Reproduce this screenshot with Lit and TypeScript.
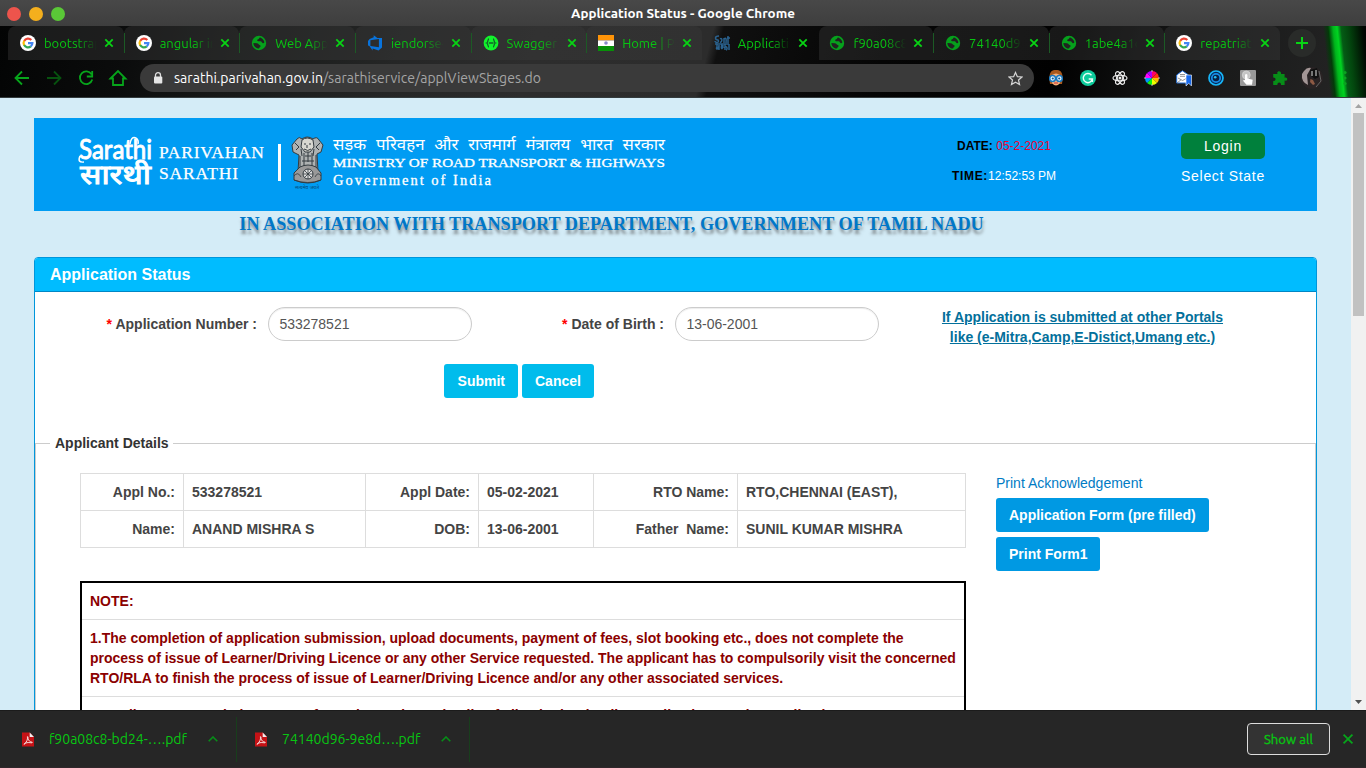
import { LitElement, html, css, svg } from "lit";
import { customElement } from "lit/decorators.js";

const google = svg`<circle cx="8" cy="8" r="8" fill="#fff"/><g fill="none" stroke-width="2.2"><path d="M4.2 5.9A4.4 4.4 0 0 1 11.3 5" stroke="#ea4335"/><path d="M4.2 5.7A4.4 4.4 0 0 0 4.2 10.3" stroke="#fbbc05"/><path d="M4.1 10.1A4.4 4.4 0 0 0 10.8 11.4" stroke="#34a853"/><path d="M8 8.1H12.4A4.4 4.4 0 0 1 10.7 11.5" stroke="#4285f4"/></g>`;
const globe = svg`<circle cx="8" cy="8" r="7.2" fill="#06a01c"/><path d="M8.8 2.5C9.8 2.5 12.9 4.2 13.4 7.2C13 8.4 11.6 8.5 11 7.6C10.6 6.6 10 6.1 8.6 6.2C7 6.3 5.9 5.9 6.2 4.9C6.6 3.9 7.9 4.3 8 3.4zM2.4 7.9L5.8 8.3C7.6 8.5 7.4 9.7 8.6 9.9C9.8 10.1 10 11.4 9 11.9C8 12.4 8.4 13.4 7.6 13.5C4.6 13.2 2.4 10.8 2.4 7.9z" fill="#202220"/>`;
const devops = svg`<path d="M1 6L2.6 3.9L6.7 2.2V.2L10.4 3L15 2.9V12.5L11.5 15.5L5.6 13.5V15.4L2.4 11.1L1 10.6ZM3.4 5.2V11L11.9 12.2V3.9Z" fill-rule="evenodd" fill="#0873dc"/>`;
const swagger = svg`<circle cx="8" cy="8" r="7.4" fill="#12f32c"/><path d="M6 4C4.6 4 5.2 7.5 3.7 8C5.2 8.5 4.6 12 6 12M10 4C11.4 4 10.8 7.5 12.3 8C10.8 8.5 11.4 12 10 12M5.8 8H10.5" fill="none" stroke="#126129" stroke-width="1.3"/>`;
const flag = svg`<path fill="#ff9408" d="M0 0H16V5.4H0z"/><path fill="#fff" d="M0 5.4H16V11H0z"/><path fill="#079008" d="M0 11H16V16H0z"/><circle cx="8" cy="8" r="1.8" fill="#8889cb"/>`;
const sarathi = svg`<g fill="none" stroke="#2a628f" stroke-width="1.5"><path d="M5 1C0 1 1 5 4 5C6 8 1 8 1 6M6 4C9 2 8 8 6 7M10 8V3M10 4C13 1 12 7 12 8M14 1V8M13 3H16M1 9H15M3 9V12C1 15 5 15 5 10V15M8 9C6 15 9 15 9 10M11 9V15M10 13C13 9 14 15 12 15M15 9V15"/></g>`;

const tabs = [
  { icon: google, label: "bootstrap" }, { icon: google, label: "angular in" }, { icon: globe, label: "Web Appli" },
  { icon: devops, label: "iendorse-" }, { icon: swagger, label: "Swagger U" }, { icon: flag, label: "Home | Pa" },
  { icon: sarathi, label: "Applicati", active: true }, { icon: globe, label: "f90a08c8-" }, { icon: globe, label: "74140d96" },
  { icon: globe, label: "1abe4a1c" }, { icon: google, label: "repatriati" },
];

const extensions = [
  svg`<path d="M2 14C0 1 4 0 8 0S16 1 14 14z" fill="#a9581b"/><path d="M4 5Q8 2 12 5V13Q8 18 4 13z" fill="#f6b17b"/><g fill="#e8f7ff" stroke="#1779c1" stroke-width="1.5"><circle cx="4.6" cy="8.5" r="2.9"/><circle cx="11.4" cy="8.5" r="2.9"/></g><circle cx="4.8" cy="8.5" r="1.1" fill="#125a94"/><circle cx="11.2" cy="8.5" r="1.1" fill="#125a94"/><path d="M6 13H10" stroke="#c6313a"/>`,
  svg`<circle cx="8" cy="8" r="8" fill="#0ecb9c"/><path d="M11.5 5.2A4.6 4.6 0 1 0 12.4 9H8.7M12.4 9V12" fill="none" stroke="#eafff8" stroke-width="1.4"/>`,
  svg`<g fill="none" stroke="#eee" stroke-width="1.15"><ellipse cx="8" cy="8" rx="7" ry="2.8"/><ellipse cx="8" cy="8" rx="7" ry="2.8" transform="rotate(60 8 8)"/><ellipse cx="8" cy="8" rx="7" ry="2.8" transform="rotate(120 8 8)"/></g><circle cx="8" cy="8" r="1.5" fill="#eee"/>`,
  svg`<path fill="#f0f" d="M8 8L1 8A7 7 0 0 1 3 3z"/><path fill="#a0f" d="M8 8L3 3A7 7 0 0 1 8 1z"/><path fill="#f06" d="M8 8L8 1A7 7 0 0 1 13 3z"/><path fill="#f31" d="M8 8L13 3A7 7 0 0 1 15 8z"/><path fill="#fb0" d="M8 8H15A7 7 0 0 1 13 13z"/><path fill="#ef0" d="M8 8L13 13A7 7 0 0 1 8 15z"/><path fill="#1e1" d="M8 8V15A7 7 0 0 1 3 13z"/><path fill="#09f" d="M8 8L3 13A7 7 0 0 1 1 8z"/><path d="M8 0V2M8 14V16M0 8H2M14 8H16" stroke="#bbb"/>`,
  svg`<path d="M.7 5L6.5.8L12.5 5V13H.7z" fill="#fff" stroke="#2470da"/><path d="M2 8L6.6 10.5L11 8M4 4.5H9M4 6.3H9M1 13L5 9.8" stroke="#777" stroke-width=".8" fill="none"/><path d="M10 5H15.5V16L12.7 13.3L10 16z" fill="#1769ed" stroke="#fff" stroke-width=".6"/>`,
  svg`<circle cx="8" cy="8" r="7" fill="#092654" stroke="#17b5f8" stroke-width="1.7"/><circle cx="8" cy="8" r="4.2" fill="#092043" stroke="#168be6" stroke-width="1.8"/><circle cx="7.2" cy="7.2" r="1.3" fill="#24bdf3"/>`,
  svg`<rect width="16" height="16" rx="1" fill="#999"/><circle cx="6.3" cy="5" r="4" fill="#c5c5c5" stroke="#ddd" stroke-width=".6"/><path d="M5 4.8Q6.3 3 7.4 4.8V8.4L12.7 9.8L12 14.8H6.5L2.8 10.5L5 10.1z" fill="#fff"/>`,
  svg`<path d="M1.2 4H5.5C4 1 9.3-.2 9.1 4H12.6V7.7C16.1 6.7 16.2 11.5 12.6 10.6V15H9C9.4 11.5 5 11.6 5.4 15H1.2V11C4.3 11 4.4 7.3 1.2 7.4z" fill="#078d18"/>`,
];

const rows = [
  ["Appl No.:", "533278521", "Appl Date:", "05-02-2021", "RTO Name:", "RTO,CHENNAI (EAST),"],
  ["Name:", "ANAND MISHRA S", "DOB:", "13-06-2001", "Father\u00a0 Name:", "SUNIL KUMAR MISHRA"],
];

const cross = html`<svg class="cross" viewBox="0 0 10 10"><path d="M1.3 1.3L8.7 8.7M8.7 1.3L1.3 8.7"/></svg>`;
const pdf = html`<svg class="pdf" viewBox="0 0 13 15"><path d="M0 0H8.5L13 4.5V15H0z" fill="#c51216"/><path d="M8.3 0L13 4.7H8.3z" fill="#eee"/><path d="M2.2 12.8C5 10.8 6.4 7 5.9 5C5.4 4 7 4 6.4 6C7 9 9 10.3 11 10.4C11.9 11.6 9 10.8 6.6 10.8C4.5 11 1.8 12.1 2.2 12.8" fill="none" stroke="#fff" stroke-width=".9"/></svg>`;

@customElement("app-root")
export class AppRoot extends LitElement {
  static styles = css`
    :host { display: flex; flex-direction: column; width: 1366px; height: 768px; overflow: hidden; font: 14px/20px "Liberation Sans", Arial, sans-serif; color: #444; }
    * { box-sizing: border-box; }
    svg { display: block; flex: none; }
    .titlebar { height: 26px; flex: none; display: grid; grid-template-columns: 1fr auto 1fr; align-items: center; background: linear-gradient(#484848, #3e3e3e); color: #fff; font: bold 13.4px/27px Ubuntu, "Noto Sans", sans-serif; }
    .lights { display: flex; gap: 8px; padding-left: 7px; }
    .light { width: 14px; height: 14px; border-radius: 50%; }
    .red { background: #ed544c; } .amber { background: #f4af1d; } .green { background: #5ac837; }
    .chrome { height: 72px; flex: none; font-family: Ubuntu, "Noto Sans", sans-serif; border-bottom: 1px solid #333b3d; background:
      linear-gradient(84deg, transparent 1323px, #023b08 1328px, #00b51c 1333px, #00d421 1337px, #045c15 1341px, #03460e 1348px, #010a02 1362px, #000 100%),
      linear-gradient(105deg, #030404 0, #0b0c0c 130px, #171918 230px, #252626 390px, #2d2d2d 520px, #2c2c2c 690px, #101010 700px, #050505 860px, #010101 1030px, #171818 1160px, #242424 1320px, #123216 100%); }
    .tabrow { height: 34px; display: flex; padding-left: 8px; }
    .tabs { width: 1272px; display: grid; grid-template-columns: repeat(11, 1fr); }
    .tab { display: flex; align-items: center; padding-left: 12px; border-radius: 8px 8px 0 0; background: rgba(58,58,58,.42); min-width: 0; position: relative; }
    .tab.active { background: none; }
    .tab.active + .tab { margin-left: 2px; padding-left: 10px; }
    .tab.sep::after { content: ""; position: absolute; right: -1px; top: 7px; width: 1px; height: 20px; background: #087218; }
    .favicon { width: 16px; height: 16px; }
    .label { width: 53px; margin-left: 8px; overflow: hidden; white-space: nowrap; font-size: 13px; line-height: 21px; padding-top: 1px; color: #08c512; mask-image: linear-gradient(90deg, #000 62%, transparent); }
    .cross { width: 10px; height: 10px; margin-left: 7px; fill: none; stroke: #08d414; stroke-width: 1.8; }
    .newtab { width: 28px; height: 28px; margin: 3px 0 0 8px; border-radius: 50%; background: #292b29; display: grid; place-items: center; }
    .newtab svg { width: 12px; height: 12px; stroke: #08d414; stroke-width: 2; }
    .toolbar { height: 36px; display: flex; align-items: center; padding-left: 14px; }
    .nav { display: flex; gap: 16px; width: 126px; }
    .nav svg { width: 16px; height: 16px; fill: none; stroke: #07a51b; stroke-width: 1.8; overflow: visible; }
    .nav .dim { stroke: #07520f; }
    .address { width: 894px; height: 28px; border-radius: 14px; background: #3a3a3a; display: flex; align-items: center; padding: 0 11px 0 13px; }
    .lock { width: 10px; height: 12px; }
    .url { margin-left: 11px; flex: 1; font-size: 14px; letter-spacing: .03px; color: #a5a5a5; }
    .host { color: #fff; }
    .star { width: 15px; height: 15px; fill: none; stroke: #d4d4d4; stroke-width: 1.3; }
    .exts { display: flex; gap: 16px; margin-left: 14px; align-items: center; }
    .exts svg { width: 16px; height: 16px; }
    .avatar { margin: 0 0 0 13px; width: 22px; height: 22px; }
    .menu { width: 4px; height: 16px; margin-left: 20px; fill: #0aa31f; }
    .viewport { height: 612px; flex: none; display: flex; overflow: hidden; background: #d4ecf7; }
    .page { width: 1351px; padding: 20px 34px 0; overflow: hidden; }
    .banner { height: 93px; background: #009cf3; display: flex; }
    .brand { width: 640px; height: 93px; }
    .brand text { fill: #fff; }
    .clock { width: 150px; margin-left: 255px; padding-top: 18px; text-align: center; font-size: 12px; }
    .clock div { height: 30px; }
    .clock b { color: #000; }
    .clock .date { color: #f00030; }
    .clock .tick { letter-spacing: .7px; }
    .time { color: #fff; }
    .account { width: 84px; margin-left: 102px; padding-top: 15px; text-align: center; color: #fff; letter-spacing: .7px; white-space: nowrap; }
    .login { height: 26px; line-height: 26px; border-radius: 5px; background: #00803c; margin-bottom: 7px; }
    .association { height: 46px; padding: 3px 128px 0 0; text-align: center; color: #0077c8; font: bold 18.2px/20px "Liberation Serif", serif; text-shadow: 1px 4px 3px rgba(80,80,80,.6); }
    .panel { border: 1px solid #0096db; border-radius: 4px 4px 0 0; background: #fff; height: 500px; }
    .heading { height: 34px; padding-left: 15px; background: #00bcff; color: #fff; border-bottom: 1px solid #0087c5; font: bold 16px/33px "Liberation Sans", sans-serif; border-radius: 3px 3px 0 0; }
    .form { display: flex; padding-top: 15px; height: 72px; font-weight: bold; line-height: 34px; }
    .form label { width: 222px; text-align: right; }
    .form label.birth { width: 192px; }
    .star-req { color: #f00; }
    .field { width: 204px; height: 34px; margin-left: 11px; border: 1px solid #ccc; border-radius: 17px; padding: 0 10.4px; font: 14px/32px "Liberation Sans", sans-serif; color: #555; box-shadow: inset 0 1px 1px rgba(0,0,0,.075); outline: none; }
    .portal { margin-left: 56.5px; width: 294px; text-align: center; color: #03709b; text-decoration: underline; line-height: 20px; }
    .actions { display: flex; gap: 4px; padding-left: 409px; height: 69px; }
    .btn { height: 34px; line-height: 34px; border-radius: 3px; padding: 0 13px; color: #fff; background: #00bcec; font-weight: bold; white-space: nowrap; }
    .submit { width: 74px; padding-left: 13.6px; } .cancel { width: 72px; }
    .deep { background: #0099e3; margin-bottom: 5px; }
    .print { width: 104px; }
    .details { margin: 0; padding: 0; border: 1px solid #ccc; height: 420px; min-width: 0; }
    .details legend { margin-left: 14px; padding: 0 4.6px 0 5px; font-weight: bold; color: #333; }
    .columns { display: flex; padding: 20px 0 0 44px; gap: 30px; }
    .left { width: 886px; }
    .facts { width: 885px; table-layout: fixed; border-collapse: collapse; font-weight: bold; }
    .facts td { border: 1px solid #ddd; height: 37px; padding: 0 8px; }
    .facts td:nth-child(odd) { text-align: right; }
    .c1 { width: 103px; } .c2 { width: 182px; } .c3 { width: 113px; } .c4 { width: 115px; } .c5 { width: 144px; } .c6 { width: 228px; }
    .notes { margin-top: 33px; border: 2px solid #000; font-weight: bold; }
    .note { padding: 8px; border-bottom: 1px solid #ddd; white-space: nowrap; color: #8b0000; }
    .right { display: flex; flex-direction: column; align-items: flex-start; }
    .ack { color: #007bc4; margin-bottom: 5px; }
    .scroll { width: 15px; background: #f1f1f1; display: flex; flex-direction: column; align-items: center; }
    .scroll svg { width: 15px; height: 15px; }
    .thumb { width: 11px; height: 203px; background: #c1c1c1; }
    .grow { flex: 1; }
    .downloads { height: 58px; flex: none; background: #262626; border-top: 1px solid #1b1b1b; border-bottom: 1px solid #30272b; display: flex; align-items: center; font: 14px/20px Ubuntu, "Noto Sans", sans-serif; color: #08c512; }
    .download { height: 45px; width: 233px; border-right: 1px solid #183e1c; display: flex; align-items: center; padding-left: 22px; }
    .download:first-child { width: 237px; }
    .download + .download { padding-left: 18px; }
    .pdf { width: 12px; height: 15px; }
    .file { width: 138px; margin-left: 15px; white-space: nowrap; }
    .chev { width: 10px; height: 6px; margin-left: 21px; fill: none; stroke: #078d18; stroke-width: 1.6; }
    .showall { width: 83px; height: 32px; border: 1px solid #ddd; border-radius: 4px; background: #333; text-align: center; line-height: 31px; font-size: 13px; -webkit-text-stroke: .35px #08c512; letter-spacing: .1px; }
    .downloads > .cross { width: 12px; height: 12px; margin: 0 12px 0 12px; stroke: #07a51b; stroke-width: 1.5; }
  `;

  private tab(t: { icon: unknown; label: string; active?: boolean }, i: number) {
    const sep = i !== 5 && i !== 6 && i !== 10;
    return html`<div class="tab ${t.active ? "active" : ""} ${sep ? "sep" : ""}"><svg class="favicon" viewBox="0 0 16 16">${t.icon}</svg><span class="label">${t.label}</span>${cross}</div>`;
  }

  private brand() {
    return html`<svg class="brand" viewBox="0 0 640 93">
      <g font-family="Liberation Serif, serif">
        <text x="45" y="41" font-size="26" font-family="Lato, sans-serif" stroke="#fff" stroke-width=".9" textLength="73" lengthAdjust="spacingAndGlyphs">Sarathi</text>
        <path d="M46 38Q43 45 50 44M96 26Q97 18 102 20Q105 22 104 26" fill="none" stroke="#fff" stroke-width="1.5"/>
        <text x="46" y="66" font-size="27" font-family="Noto Sans Devanagari, Noto Sans, sans-serif" stroke="#fff" stroke-width="1" textLength="71" lengthAdjust="spacingAndGlyphs">सारथी</text>
        <g stroke="#fff" stroke-width=".25">
          <text x="125" y="40" font-size="17.5" textLength="105" lengthAdjust="spacing">PARIVAHAN</text>
          <text x="125" y="61" font-size="17.5" textLength="79" lengthAdjust="spacing">SARATHI</text>
        </g>
        <path d="M245.5 26V63" stroke="#fff" stroke-width="3"/>
        <text x="299" y="49" font-size="13" stroke="#fff" stroke-width=".3" textLength="332" lengthAdjust="spacingAndGlyphs">MINISTRY OF ROAD TRANSPORT &amp; HIGHWAYS</text>
        <text x="299" y="67" font-size="14.5" stroke="#fff" stroke-width=".3" textLength="158" lengthAdjust="spacing">Government of India</text>
      </g>
      <text x="299" y="32" font-size="15.5" font-family="Noto Sans Devanagari, Noto Sans, sans-serif" word-spacing="5" textLength="332" lengthAdjust="spacingAndGlyphs">सड़क परिवहन और राजमार्ग मंत्रालय भारत सरकार</text>
      <g stroke="#333b40" stroke-width="1">
        <path d="M263 21Q265 18 268 21Q273 17 279 21Q283 18 285 22L289 27L287 34L283 36L284 54H264L265 37L259 34L258 27z" fill="#aeb2b2"/>
        <path d="M268 22Q273 18 279 22L280 29L276 34H271L267 29z" fill="#d7d7d0"/>
        <path d="M270 26H272M275 26H277M273 27V30M270 31Q274 34 277 31M261 25L265 29L262 32M286 25L282 29L285 32M267 31L268 38M280 31L279 38M266 38V50M270 35V51M274 34V44M278 35V51M282 37V50M271 38H277M268 43H280" fill="none"/>
        <path d="M266 49Q274 45 282 49L287 55V62Q274 68 260 62V55z" fill="#999"/>
        <circle cx="274" cy="56" r="5" fill="#ddd"/><path d="M269 56H279M274 51V61M270.5 52.5L277.5 59.5M277.5 52.5L270.5 59.5M260 58Q264 53 267 59M281 59Q284 53 287 58M260 62Q274 67 287 62" fill="none" stroke-width=".8"/>
      </g>
      <text x="261" y="71" font-size="5" font-family="Noto Sans Devanagari, sans-serif" textLength="24" lengthAdjust="spacingAndGlyphs" style="fill:#064b78">सत्यमेव जयते</text>
    </svg>`;
  }

  render() {
    return html`
      <header class="titlebar"><div class="lights"><i class="light red"></i><i class="light amber"></i><i class="light green"></i></div><span class="title">Application Status - Google Chrome</span></header>
      <section class="chrome">
        <div class="tabrow"><div class="tabs">${tabs.map((t, i) => this.tab(t, i))}</div><div class="newtab"><svg viewBox="0 0 12 12"><path d="M6 0V12M0 6H12"/></svg></div></div>
        <div class="toolbar">
          <div class="nav">
            <svg viewBox="0 0 16 16"><path d="M15 8H2M8 1.5L1.5 8L8 14.5"/></svg>
            <svg class="dim" viewBox="0 0 16 16"><path d="M1 8H14M8 1.5L14.5 8L8 14.5"/></svg>
            <svg viewBox="0 0 16 16"><path d="M13.5 4.2A6.3 6.3 0 1 0 14.3 9.5M14.2 1V6.5H8.8"/></svg>
            <svg viewBox="0 0 16 16"><path d="M.5 8.5L8 1L15.5 8.5H13V15H3V8.5z"/></svg>
          </div>
          <div class="address">
            <svg class="lock" viewBox="0 0 10 12"><path d="M2.5 5V3.2a2.5 2.5 0 0 1 5 0V5" fill="none" stroke="#ddd" stroke-width="1.3"/><rect x="1" y="4.5" width="8.3" height="7" rx="1" fill="#e6e6e6"/></svg>
            <span class="url"><span class="host">sarathi.parivahan.gov.in</span>/sarathiservice/applViewStages.do</span>
            <svg class="star" viewBox="0 0 16 16"><path d="M8 1.5L10 6L14.9 6.4L11.2 9.6L12.3 14.4L8 11.9L3.7 14.4L4.8 9.6L1.1 6.4L6 6z"/></svg>
          </div>
          <div class="exts">${extensions.map((e) => html`<svg viewBox="0 0 16 16">${e}</svg>`)}</div>
          <svg class="avatar" viewBox="0 0 22 22"><circle cx="11" cy="11" r="11" fill="#292324"/><path d="M3 4Q6 0 10 1L6 8L7 18Q0 15 1 7z" fill="#a39696"/><path d="M9 3L16 1L18 10L14 12L10 9z" fill="#101010"/><path d="M11 4V9M15 3V9" stroke="#ddd"/><path d="M9.5 12L12 13L14 17L12 18L9 15z" fill="#8d5a44"/><path d="M18 4L20 14L15 20" stroke="#666" fill="none"/></svg>
          <svg class="menu" viewBox="0 0 4 16"><circle cx="2" cy="2.5" r="1.6"/><circle cx="2" cy="8" r="1.6"/><circle cx="2" cy="13.5" r="1.6"/></svg>
        </div>
      </section>
      <section class="viewport">
        <main class="page">
          <div class="banner">${this.brand()}
            <div class="clock"><div><b>DATE:</b> <span class="date">05-2-2021</span></div><div><b class="tick">TIME:</b><span class="time">12:52:53 PM</span></div></div>
            <div class="account"><div class="login">Login</div><div>Select State</div></div>
          </div>
          <div class="association">IN ASSOCIATION WITH TRANSPORT DEPARTMENT, GOVERNMENT OF TAMIL NADU</div>
          <div class="panel">
            <div class="heading">Application Status</div>
            <div class="form">
              <label><span class="star-req">*</span> Application Number :</label><input class="field" .value=${"533278521"}>
              <label class="birth"><span class="star-req">*</span> Date of Birth :</label><input class="field" .value=${"13-06-2001"}>
              <div class="portal">If Application is submitted at other Portals<br>like (e-Mitra,Camp,E-Distict,Umang etc.)</div>
            </div>
            <div class="actions"><div class="btn submit">Submit</div><div class="btn cancel">Cancel</div></div>
            <fieldset class="details"><legend>Applicant Details</legend>
              <div class="columns">
                <div class="left">
                  <table class="facts"><colgroup>${[1, 2, 3, 4, 5, 6].map((n) => html`<col class="c${n}">`)}</colgroup><tbody>${rows.map((r) => html`<tr>${r.map((c) => html`<td>${c}</td>`)}</tr>`)}</tbody></table>
                  <div class="notes">
                    <div class="note">NOTE:</div>
                    <div class="note">1.The completion of application submission, upload documents, payment of fees, slot booking etc., does not complete the<br>process of issue of Learner/Driving Licence or any other Service requested. The applicant has to compulsorily visit the concerned<br>RTO/RLA to finish the process of issue of Learner/Driving Licence and/or any other associated services.</div>
                    <div class="note">2.Applicant can track the status of scrutiny and test details of all submitted online applications under Application</div>
                  </div>
                </div>
                <div class="right"><span class="ack">Print Acknowledgement</span><div class="btn deep">Application Form (pre filled)</div><div class="btn deep print">Print Form1</div></div>
              </div>
            </fieldset>
          </div>
        </main>
        <aside class="scroll"><svg viewBox="0 0 15 15"><path d="M4 10L7.5 6L11 10z" fill="#a3a3a3"/></svg><div class="thumb"></div><div class="grow"></div><svg viewBox="0 0 15 15"><path d="M4 5L7.5 9L11 5z" fill="#505050"/></svg></aside>
      </section>
      <footer class="downloads">
        ${["f90a08c8-bd24-….pdf", "74140d96-9e8d….pdf"].map((f) => html`<div class="download">${pdf}<span class="file">${f}</span><svg class="chev" viewBox="0 0 10 6"><path d="M.7 5.3L5 1L9.3 5.3"/></svg></div>`)}
        <div class="grow"></div><div class="showall">Show all</div>${cross}
      </footer>`;
  }
}
